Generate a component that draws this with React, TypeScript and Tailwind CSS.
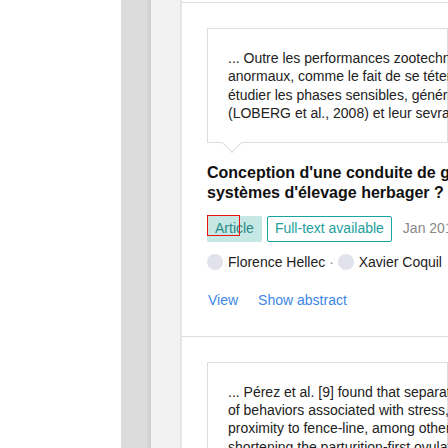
import React from "react";

const font = { fontFamily: '"Liberation Sans", Arial, sans-serif' };

function Quote({ lines }: { lines: string[] }) {
  return (
    <div className="relative border border-[#dddddd] bg-white pl-5 pr-0 pt-5 pb-[19px] text-[14px] leading-[18.4px] text-[#222] whitespace-nowrap">
      {lines.map((l, i) => (
        <div key={i}>{l}</div>
      ))}
      <div className="absolute left-[17px] bottom-[-8px] h-[14px] w-[14px] rotate-45 border-b border-r border-[#dddddd] bg-white" />
    </div>
  );
}

function Avatar() {
  return <span className="inline-block h-4 w-4 shrink-0 rounded-full bg-[#e2e2ec]" />;
}

export default function App() {
  return (
    <div className="flex h-[448px] w-[448px] overflow-hidden bg-white" style={font}>
      <div className="w-[121px] shrink-0 bg-white" />
      <div className="w-[30px] shrink-0 bg-[linear-gradient(to_right,#dcdcdc_82%,#cdcdcd)]" />
      <div className="w-[31px] shrink-0 border-r-2 border-[#e6e6e6] bg-[#f2f2f2]" />
      <div className="flex min-w-0 flex-1 flex-col">
        <div className="h-[2px] shrink-0 bg-white" />
        <div className="border-t border-[#dddddd] pl-[25px] pt-[25px] pb-[27px]">
          <Quote
            lines={[
              "... Outre les performances zootechniques",
              "anormaux, comme le fait de se téter",
              "étudier les phases sensibles, générales",
              "(LOBERG et al., 2008) et leur sevrage",
            ]}
          />
          <div className="mt-[20px] whitespace-nowrap text-[16px] font-bold leading-[20.5px] text-[#111]">
            <div>Conception d'une conduite de génisses</div>
            <div>systèmes d'élevage herbager ?</div>
          </div>
          <div className="mt-[12px] flex items-center whitespace-nowrap text-[14px]">
            <div className="relative">
              <span className="flex h-[26px] items-center rounded-[2px] bg-[#c5e8e4] px-2 text-[#2b8a88]">Article</span>
              <span className="absolute left-0 top-[-1px] h-[21px] w-[33px] border border-[#ee1111]" />
            </div>
            <span className="ml-[5px] flex h-[26px] items-center rounded-[2px] border border-[#16a5a0] px-[7px] text-[#23a09c]">
              Full-text available
            </span>
            <span className="ml-[11px] text-[#888]">Jan 2013</span>
          </div>
          <div className="mt-[11px] flex items-center whitespace-nowrap text-[14px] leading-[18px] text-[#222]">
            <Avatar />
            <span className="ml-[5px]">Florence Hellec</span>
            <span className="text-[#888]">&nbsp;·&nbsp;</span>
            <Avatar />
            <span className="ml-[5px]">Xavier Coquil</span>
          </div>
          <div className="mt-[20px] flex whitespace-nowrap text-[14px] leading-[18px] text-[#3d86e6]">
            <span className="ml-px">View</span>
            <span className="ml-[20px]">Show abstract</span>
          </div>
        </div>
        <div className="border-t border-[#dddddd] pl-[25px] pt-[25px]">
          <Quote
            lines={[
              "... Pérez et al. [9] found that separation",
              "of behaviors associated with stress,",
              "proximity to fence-line, among others",
              "shortening the parturition-first ovulation",
            ]}
          />
        </div>
      </div>
    </div>
  );
}
